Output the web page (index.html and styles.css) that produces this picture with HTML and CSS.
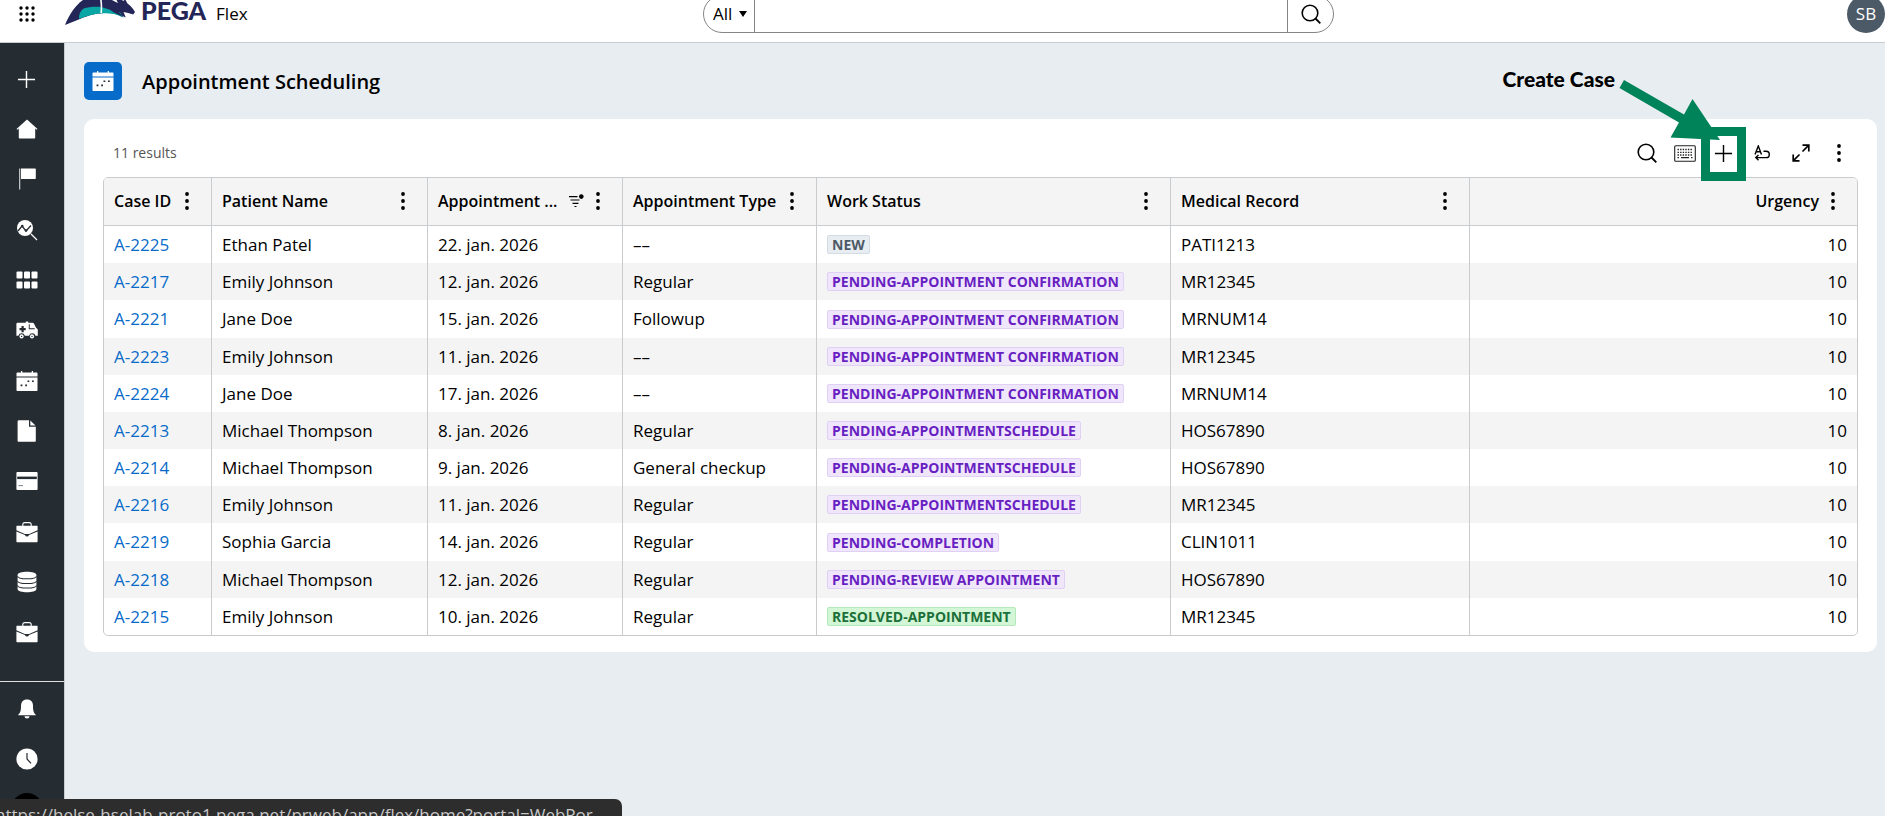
FILE: index.html
```html
<!DOCTYPE html>
<html lang="en">
<head>
<meta charset="utf-8">
<title>Appointment Scheduling</title>
<link rel="stylesheet" href="styles.css">
</head>
<body>
<svg class="defs" aria-hidden="true">
  <symbol id="dots" viewBox="0 0 20 20"><circle cx="10" cy="3" r="1.9"/><circle cx="10" cy="10" r="1.9"/><circle cx="10" cy="17" r="1.9"/></symbol>
  <symbol id="plus" viewBox="0 0 20 20"><path d="M10 1v18M1 10h18" fill="none" stroke="currentColor" stroke-width="1.5"/></symbol>
  <symbol id="search" viewBox="0 0 20 20"><circle cx="9" cy="9" r="7.8" fill="none" stroke="currentColor" stroke-width="1.6"/><path d="M14.5 14.5l4.8 4.8" fill="none" stroke="currentColor" stroke-width="1.8"/></symbol>
  <symbol id="calendar" viewBox="0 0 22 20"><path d="M.5 2.5Q.5 1.6 1.4 1.6H5V0h1.3v1.6h9.4V0H17v1.6h3.6q.9 0 .9.9v3H.5zM.5 6.6h21v12.6q0 .8-.8.8H1.3q-.8 0-.8-.8z"/><path class="cut" d="M11.5 9.4h1.8v1.6h-1.8zM16 9.4h1.8v1.6H16zM4.6 13.6h1.8v1.6H4.6zM9.2 13.6H11v1.6H9.2z"/></symbol>
  <symbol id="briefcase" viewBox="0 0 22 22"><path d="M6.8 5.2V3.6q0-2 2-2h4.4q2 0 2 2v1.6" fill="none" stroke="currentColor" stroke-width="1.1"/><path d="M1 4.7h20q.6 0 .6.6v4L13.2 13h-4.4L.4 9.3v-4q0-.6.6-.6zM.4 10.5l8.6 3.6q.5 1.5 2 1.5t2-1.5l8.6-3.6v10q0 .7-.7.7H1.1q-.7 0-.7-.7z"/></symbol>
</svg>

<header class="topbar">
  <div class="topbar-left">
    <button class="apps" aria-label="Switch app">
      <svg width="16" height="16" viewBox="0 0 16 16"><g><circle cx="2" cy="2" r="1.7"/><circle cx="8" cy="2" r="1.7"/><circle cx="14" cy="2" r="1.7"/><circle cx="2" cy="8" r="1.7"/><circle cx="8" cy="8" r="1.7"/><circle cx="14" cy="8" r="1.7"/><circle cx="2" cy="14" r="1.7"/><circle cx="8" cy="14" r="1.7"/><circle cx="14" cy="14" r="1.7"/></g></svg>
    </button>
    <a class="brand" href="#">
      <svg class="horse" width="70" height="34" viewBox="0 0 70 34"><path d="M0 34C5 22 11 13 21 7H43C47 9 49 10 53 12L51 8l5 .5 2.500 1.500L60 8l2.500 4.500c3 2 5.500 5 7.500 8.500l-1.800 2.500-5-1.500-4.700-1 2.300 5.500C54 23 48 22 42 22c-10 0-18 2-27 6C10 30 5 32 0 34z" fill="#232657"/><path d="M14 27.800c0-5 1.500-9 6-10.800 6-1.200 10-1.500 16-1l19 5.500 3.500 5.300C53 23.500 47 22.300 41 22.300c-9-.2-17 1.800-27 5.500z" fill="#0aa5a5"/><path d="M38 16c5-1 10 0 14 3l6 7-9-4.500-5-3.500z" fill="#232657"/><path d="M35.500 7c1 4 1.200 9 .7 15" stroke="#fff" stroke-width="1.600" fill="none"/></svg>
      <span class="brand-name">PEGA</span>
      <span class="app-name">Flex</span>
    </a>
  </div>
  <form class="search" role="search">
    <div class="scope">
      <select aria-label="Search scope"><option>All</option></select>
      <svg class="caret" width="8" height="6" viewBox="0 0 8 6"><path d="M0 0h8L4 6z"/></svg>
    </div>
    <input type="text" aria-label="Search">
    <button type="button" aria-label="Search"><svg width="20" height="20"><use href="#search"/></svg></button>
  </form>
  <button class="avatar" aria-label="User SB">SB</button>
</header>

<div class="shell">
  <nav class="rail" aria-label="Main">
    <div class="rail-group">
      <button aria-label="Create"><svg width="19" height="19"><use href="#plus"/></svg></button>
      <a href="#" aria-label="Home"><svg width="22" height="20" viewBox="0 0 22 20"><path d="M11 .5L21.500 10l-.8.8-1.500-1.200v9.200q0 .7-.7.7h-15q-.7 0-.7-.7V9.600l-1.500 1.200L.5 10z"/></svg></a>
      <a href="#" aria-label="Flag"><svg width="18" height="22" viewBox="0 0 18 22"><path d="M1 .5h1.300v21H1z" opacity=".7"/><path d="M3 .5h14q.8 0 .8.800v9q0 .8-.8.800H3z"/></svg></a>
    </div>
    <div class="rail-group">
      <a href="#" aria-label="Explore data"><svg width="22" height="22" viewBox="0 0 22 22"><circle cx="9" cy="9" r="8"/><path d="M2 12l4-5 4 5 5-5.500" fill="none" stroke="#252c32" stroke-width="1.300"/><circle class="cut" cx="6.300" cy="7" r="1.300"/><circle class="cut" cx="10" cy="11.500" r="1.300"/><path d="M15 15l6 6" stroke="#fff" stroke-width="1.200"/></svg></a>
      <a href="#" aria-label="Apps"><svg width="22" height="18" viewBox="0 0 22 18"><rect x="0.500" y="0.500" width="6" height="7" rx="1"/><rect x="8" y="0.500" width="6" height="7" rx="1"/><rect x="15.500" y="0.500" width="6" height="7" rx="1"/><rect x="0.500" y="10.500" width="6" height="7" rx="1"/><rect x="8" y="10.500" width="6" height="7" rx="1"/><rect x="15.500" y="10.500" width="6" height="7" rx="1"/></svg></a>
      <a href="#" aria-label="Ambulance"><svg width="22" height="18" viewBox="0 0 22 18"><path d="M1.500 1.800h8.300V.4h2.400v1.400h4.500q.8 0 1.200.8l2.300 4.500 1.200.8q.4.300.4.800v6h-2.300a3.400 3.400 0 0 0-6.500 0H8.900a3.400 3.400 0 0 0-6.500 0H.400V2.900q0-1.100 1.100-1.100z"/><path class="cut" d="M5.500 5h2.200v2h2v2.200h-2v2H5.500v-2h-2V7h2zM12.800 3.300h.9v4h5v.9h-5.900z"/><circle cx="5.600" cy="15.400" r="2.100"/><circle cx="16" cy="15.400" r="2.100"/><circle class="cut" cx="5.600" cy="15.400" r=".7"/><circle class="cut" cx="16" cy="15.400" r=".7"/></svg></a>
    </div>
    <div class="rail-group">
      <a href="#" aria-label="Appointments"><svg width="22" height="20"><use href="#calendar"/></svg></a>
      <a href="#" aria-label="Documents"><svg width="20" height="22" viewBox="0 0 20 22"><path d="M2 .3h10v6.500h6.800V21q0 .7-.7.7H1.300q-.7 0-.7-.7V1.500Q.6.300 2 .3zM13.300.6L18.500 5.600H13.300z"/></svg></a>
      <a href="#" aria-label="Cards"><svg width="22" height="18" viewBox="0 0 22 18"><rect x=".4" width="21.200" height="18" rx="1"/><path class="cut" d="M1.200 4.600h19.600v2.500H1.200z"/><path d="M2.500 13.600H7" stroke="#7b8288"/></svg></a>
    </div>
    <div class="rail-group">
      <a href="#" aria-label="Cases"><svg width="22" height="22"><use href="#briefcase"/></svg></a>
      <a href="#" aria-label="Data"><svg width="20" height="22" viewBox="0 0 20 22"><path d="M.6 4c0-4.400 18.800-4.400 18.800 0v14c0 4.400-18.800 4.400-18.800 0z"/><path d="M.6 5.200c0 3.400 18.800 3.400 18.800 0M.6 10c0 3.400 18.800 3.400 18.800 0M.6 14.500c0 3.400 18.800 3.400 18.800 0" fill="none" stroke="#252c32" stroke-width="1.100"/></svg></a>
      <a href="#" aria-label="Work"><svg width="22" height="22"><use href="#briefcase"/></svg></a>
    </div>
    <div class="rail-foot">
      <button aria-label="Notifications"><svg width="18" height="20" viewBox="0 0 18 20"><path d="M9 .5c4 0 6 2.600 6 6.500 0 5 .8 7 2.700 8.500v.8H.3v-.8C2.200 14 3 12 3 7 3 3.100 5 .5 9 .5zM6.400 17.300h5.200Q11.300 19.500 9 19.500t-2.600-2.200z"/></svg></button>
      <button aria-label="Recents"><svg width="22" height="22" viewBox="0 0 22 22"><circle cx="11" cy="11" r="10.600"/><path d="M11 5v6l4 4.300" fill="none" stroke="#252c32" stroke-width="1.200"/></svg></button>
      <button aria-label="Profile"><span class="disc"></span></button>
    </div>
  </nav>

  <main class="content">
    <div class="heading">
      <span class="tile"><svg width="22" height="20"><use href="#calendar"/></svg></span>
      <h1>Appointment Scheduling</h1>
    </div>

    <section class="card">
      <div class="toolbar">
        <span class="count">11 results</span>
        <div class="tools">
          <button aria-label="Search"><svg width="20" height="20"><use href="#search"/></svg></button>
          <button aria-label="Keyboard shortcuts"><svg width="22" height="17" viewBox="0 0 22 17"><rect x=".7" y=".7" width="20.600" height="15.600" rx="1" fill="none" stroke="#222" stroke-width="1.100"/><path d="M3.500 4.500h15M3.500 7.300h15M3.500 10h15" stroke="#222" stroke-width="1.300" stroke-dasharray="1.400 1.200"/><path d="M3.500 12.700h1.500M7 12.700h8M17 12.700h1.500" stroke="#222" stroke-width="1.300"/></svg></button>
          <button class="spaced" aria-label="Create case"><svg width="19" height="19"><use href="#plus"/></svg></button>
          <button class="spaced" aria-label="Wrap text"><svg width="16" height="16" viewBox="0 0 16 16" fill="none" stroke="#000" stroke-width="1.400"><path d="M1 9.500L4.300 1l3.200 8.500M2.200 6.700h4.300M9.500 6.200h2.600a3.200 3.200 0 0 1 0 6.400H2M4.500 10L1.800 12.600l2.700 2.600"/></svg></button>
          <button aria-label="Expand"><svg width="18" height="18" viewBox="0 0 18 18" fill="none" stroke="#000" stroke-width="1.700"><path d="M10.500 1.200h6.300v6.300M16.800 1.200l-6.300 6.300M7.500 16.800H1.200v-6.300M1.200 16.800l6.300-6.300"/></svg></button>
          <button aria-label="More actions"><svg width="20" height="20"><use href="#dots"/></svg></button>
        </div>
      </div>

      <table>
        <colgroup><col class="c-id"><col class="c-name"><col class="c-date"><col class="c-type"><col class="c-status"><col class="c-record"><col></colgroup>
        <thead>
          <tr>
            <th scope="col"><div class="th"><span>Case ID</span><button aria-label="Case ID menu"><svg width="20" height="20"><use href="#dots"/></svg></button></div></th>
            <th scope="col"><div class="th"><span>Patient Name</span><button aria-label="Patient Name menu"><svg width="20" height="20"><use href="#dots"/></svg></button></div></th>
            <th scope="col"><div class="th"><span>Appointment ...</span><svg class="sort" width="15" height="14" viewBox="0 0 15 14"><path d="M0 2.600h8.500M1.500 6h9M3.500 9.400h6M5.500 12.500h2" stroke="#000" stroke-width="1.200"/><circle cx="12.300" cy="2.600" r="2.300"/></svg><button aria-label="Appointment Date menu"><svg width="20" height="20"><use href="#dots"/></svg></button></div></th>
            <th scope="col"><div class="th"><span>Appointment Type</span><button aria-label="Appointment Type menu"><svg width="20" height="20"><use href="#dots"/></svg></button></div></th>
            <th scope="col"><div class="th"><span>Work Status</span><button aria-label="Work Status menu"><svg width="20" height="20"><use href="#dots"/></svg></button></div></th>
            <th scope="col"><div class="th"><span>Medical Record</span><button aria-label="Medical Record menu"><svg width="20" height="20"><use href="#dots"/></svg></button></div></th>
            <th scope="col"><div class="th end"><span>Urgency</span><button aria-label="Urgency menu"><svg width="20" height="20"><use href="#dots"/></svg></button></div></th>
          </tr>
        </thead>
        <tbody>
          <tr><td><a href="#">A-2225</a></td><td>Ethan Patel</td><td>22. jan. 2026</td><td>––</td><td><span class="badge new">NEW</span></td><td>PATI1213</td><td>10</td></tr>
          <tr><td><a href="#">A-2217</a></td><td>Emily Johnson</td><td>12. jan. 2026</td><td>Regular</td><td><span class="badge">PENDING-APPOINTMENT CONFIRMATION</span></td><td>MR12345</td><td>10</td></tr>
          <tr><td><a href="#">A-2221</a></td><td>Jane Doe</td><td>15. jan. 2026</td><td>Followup</td><td><span class="badge">PENDING-APPOINTMENT CONFIRMATION</span></td><td>MRNUM14</td><td>10</td></tr>
          <tr><td><a href="#">A-2223</a></td><td>Emily Johnson</td><td>11. jan. 2026</td><td>––</td><td><span class="badge">PENDING-APPOINTMENT CONFIRMATION</span></td><td>MR12345</td><td>10</td></tr>
          <tr><td><a href="#">A-2224</a></td><td>Jane Doe</td><td>17. jan. 2026</td><td>––</td><td><span class="badge">PENDING-APPOINTMENT CONFIRMATION</span></td><td>MRNUM14</td><td>10</td></tr>
          <tr><td><a href="#">A-2213</a></td><td>Michael Thompson</td><td>8. jan. 2026</td><td>Regular</td><td><span class="badge">PENDING-APPOINTMENTSCHEDULE</span></td><td>HOS67890</td><td>10</td></tr>
          <tr><td><a href="#">A-2214</a></td><td>Michael Thompson</td><td>9. jan. 2026</td><td>General checkup</td><td><span class="badge">PENDING-APPOINTMENTSCHEDULE</span></td><td>HOS67890</td><td>10</td></tr>
          <tr><td><a href="#">A-2216</a></td><td>Emily Johnson</td><td>11. jan. 2026</td><td>Regular</td><td><span class="badge">PENDING-APPOINTMENTSCHEDULE</span></td><td>MR12345</td><td>10</td></tr>
          <tr><td><a href="#">A-2219</a></td><td>Sophia Garcia</td><td>14. jan. 2026</td><td>Regular</td><td><span class="badge">PENDING-COMPLETION</span></td><td>CLIN1011</td><td>10</td></tr>
          <tr><td><a href="#">A-2218</a></td><td>Michael Thompson</td><td>12. jan. 2026</td><td>Regular</td><td><span class="badge">PENDING-REVIEW APPOINTMENT</span></td><td>HOS67890</td><td>10</td></tr>
          <tr><td><a href="#">A-2215</a></td><td>Emily Johnson</td><td>10. jan. 2026</td><td>Regular</td><td><span class="badge resolved">RESOLVED-APPOINTMENT</span></td><td>MR12345</td><td>10</td></tr>
        </tbody>
      </table>
    </section>

    <div class="callout">
      <span>Create Case</span>
      <svg width="127" height="102" viewBox="0 0 127 102"><path d="M5 0l60 34.500L73.500 19 101 60 51.500 57.500 60 42.500.5 8z" fill="#008359"/><path d="M86.500 51.500h36v45h-36z" fill="none" stroke="#008359" stroke-width="9"/></svg>
    </div>
  </main>
</div>

<div class="status-url">https://helse-hselab-proto1.pega.net/prweb/app/flex/home?portal=WebPor...</div>
</body>
</html>
```
FILE: styles.css
```css
* { box-sizing: border-box; }

html, body { height: 100%; }

body {
  margin: 0;
  display: flex;
  flex-direction: column;
  overflow: hidden;
  background: #e8edf1;
  color: #000;
  font: 17px/24px "Open Sans", "Noto Sans", sans-serif;
}

button, input, select { font: inherit; color: inherit; }

button {
  display: inline-flex;
  align-items: center;
  justify-content: center;
  padding: 0;
  border: 0;
  background: none;
}

a { color: #076bc9; text-decoration: none; }
svg { display: block; flex: none; }
.defs { position: absolute; width: 0; height: 0; }

.topbar {
  flex: none;
  display: grid;
  grid-template-columns: 703fr 631fr 551fr;
  align-items: center;
  height: 57px;
  margin-top: -14px;
  background: #fff;
  border-bottom: 1px solid #c9cccf;
}

.topbar-left { display: flex; align-items: center; }
.apps { width: 53px; height: 38px; }
.brand { display: flex; align-items: center; margin-left: 12px; color: #000; }
.horse { margin-bottom: 12px; }
.brand-name {
  margin: 0 10px 8px 6px;
  color: #232657;
  font: 900 25px/18px Lato, sans-serif;
}

.search {
  display: flex;
  height: 38px;
  border: 1px solid #858585;
  border-radius: 19px;
  overflow: hidden;
}
.scope { position: relative; width: 51px; border-right: 1px solid #858585; }
.scope select {
  width: 100%;
  height: 100%;
  padding: 0 0 0 9px;
  border: 0;
  background: none;
  appearance: none;
}
.caret { position: absolute; right: 7px; top: 15px; pointer-events: none; }
.search input { flex: 1; min-width: 0; border: 0; background: none; outline: 0; }
.search button { width: 46px; border-left: 1px solid #858585; }

.avatar {
  justify-self: end;
  width: 38px;
  height: 38px;
  border-radius: 50%;
  background: #4c5a67;
  color: #fff;
}

.shell { flex: 1; display: flex; min-height: 0; }

/* Navigation rail */
.rail {
  flex: none;
  display: flex;
  flex-direction: column;
  gap: 1px;
  width: 65px;
  padding-top: 11px;
  overflow: hidden;
  background: #252c32;
  border-right: 1px solid #c9cccf;
  color: #fff;
  fill: #fff;
}
.rail-group, .rail-foot { flex: none; display: flex; flex-direction: column; }
.rail a, .rail button {
  display: flex;
  align-items: center;
  justify-content: center;
  width: 53px;
  height: 50px;
  color: #fff;
}
.cut { fill: #252c32; }
.rail-foot { margin-top: 23px; padding-top: 2px; border-top: 1px solid #e0e0e0; }
.disc { width: 32px; height: 32px; border-radius: 50%; background: #000; }

/* Content */
.content { position: relative; flex: 1; min-width: 0; padding: 19px 8px 0 19px; }

.heading { display: flex; align-items: center; gap: 20px; margin-bottom: 19px; }
.tile {
  display: flex;
  align-items: center;
  justify-content: center;
  width: 38px;
  height: 38px;
  border-radius: 5px;
  background: #076bc9;
  fill: #fff;
}
h1 { margin: 0; padding-top: 2px; font-size: 20px; line-height: 28px; font-weight: 600; }

.card { padding: 15px 19px 16px; border-radius: 10px; background: #fff; }
.toolbar {
  display: flex;
  align-items: center;
  justify-content: space-between;
  margin-bottom: 5px;
  padding-left: 10px;
}
.count { color: #555; font-size: 14px; }
.tools { display: flex; }
.tools button { width: 38px; height: 38px; }
.tools .spaced { margin-right: 1px; }

table {
  width: 100%;
  table-layout: fixed;
  border: 1px solid #c9cccf;
  border-radius: 5px;
  border-spacing: 0;
  overflow: hidden;
}
.c-id { width: 108px; }
.c-name { width: 216px; }
.c-date { width: 195px; }
.c-type { width: 194px; }
.c-status { width: 354px; }
.c-record { width: 299px; }

th, td { padding: 0 10px; text-align: left; white-space: nowrap; }
th:not(:last-child), td:not(:last-child) { border-right: 1px solid #c9cccf; }
th {
  height: 48px;
  padding-bottom: 1px;
  background: #f4f4f4;
  border-bottom: 1px solid #c9cccf;
  font-size: 16px;
  font-weight: 600;
}
.th { display: flex; align-items: center; justify-content: space-between; }
.th button { width: 28px; height: 28px; }
.th.end { justify-content: flex-end; }
.sort { margin-left: auto; }
td { height: 37px; }
tr:nth-child(6n+3) td { height: 38px; }
tbody tr:nth-child(even) { background: #f4f4f4; }
td:last-child { text-align: right; }

.badge {
  display: block;
  width: fit-content;
  padding: 0 4px;
  border: 1px solid #dfd0f4;
  border-radius: 2px;
  background: #f0e6fb;
  color: #681fc2;
  font-size: 14px;
  line-height: 17px;
  font-weight: 700;
}
.badge.new { border-color: #d3dce4; background: #e8edf1; color: #4c5a67; }
.badge.resolved { border-color: #b5e8bb; background: #d3f6d6; color: #1c703a; }

/* Annotation over the toolbar */
.callout {
  position: absolute;
  top: 37px;
  right: 139px;
  display: flex;
  gap: 4px;
  pointer-events: none;
}
.callout span {
  margin-top: -14px;
  font: 900 21px/26px Lato, "Open Sans", sans-serif;
}

/* Link preview */
.status-url {
  position: fixed;
  left: 0;
  bottom: -15px;
  width: 622px;
  height: 32px;
  padding-right: 16px;
  border-radius: 0 7px 0 0;
  background: #2d2d2d;
  color: #c8c8c8;
  line-height: 32px;
  white-space: nowrap;
  overflow: hidden;
  text-indent: -5px;
}
```
